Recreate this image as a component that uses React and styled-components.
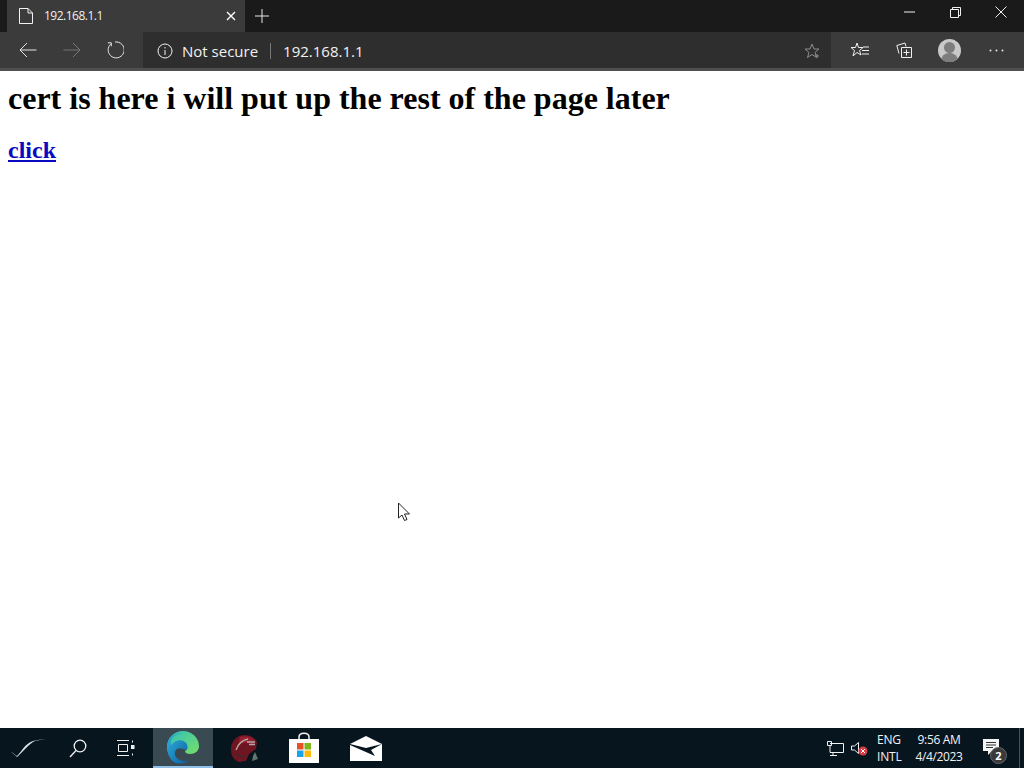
import React from 'react';
import styled, { createGlobalStyle } from 'styled-components';

const Global = createGlobalStyle`
  html, body { margin: 0; padding: 0; height: 100%; overflow: hidden; background: #fff; }
  #root { height: 100%; }
`;
const Screen = styled.div`
  position: relative; width: 1024px; height: 768px; display: flex; flex-direction: column;
  font-family: "Open Sans", "Noto Sans", sans-serif; overflow: hidden;
`;
const Glyph = styled.svg.attrs(p => ({
  fill: p.fill || 'none',
  stroke: p.$noStroke ? 'none' : 'currentColor',
  strokeWidth: p.$weight || 1,
}))`
  color: ${p => p.$tone || '#f2f2f2'};
  flex: none;
  margin-right: ${p => p.$nudgeLeft || 0}px;
  margin-left: ${p => p.$nudgeRight || 0}px;
`;
const TitleBar = styled.div`
  height: 32px; background: #1a1a1a; display: flex; align-items: flex-end; flex: none; padding-left: 7px;
`;
const Tab = styled.div`
  width: 238px; height: 32px; box-sizing: border-box; background: #3b3b3b; display: flex; align-items: center;
  padding: 0 9px 0 12px; color: #f0f0f0; font-size: 12px; letter-spacing: -0.5px;
`;
const TabTitle = styled.span`
  flex: 1; margin-left: 11px; margin-top: -1px;
`;
const NewTab = styled.div`
  width: 34px; height: 32px; display: flex; align-items: center; justify-content: center;
`;
const WindowButtons = styled.div`
  margin-left: auto; height: 32px; display: flex;
`;
const WindowButton = styled.div`
  width: 46px; height: 24px; display: flex; align-items: center; justify-content: center;
`;
const Toolbar = styled.div`
  height: 36px; flex: none; background: #3b3b3b; border-bottom: 3px solid #4f4f4f; box-sizing: content-box;
  display: flex; align-items: center; padding-left: 6px;
`;
const NavButton = styled.div`
  width: 44px; height: 36px; display: flex; align-items: center; justify-content: center; flex: none;
`;
const AddressBar = styled.div`
  width: 688px; height: 36px; margin-left: 5px; background: #2e2e2e; display: flex; align-items: center;
  padding-left: 14px; box-sizing: border-box; color: #f2f2f2; font-size: 15px; flex: none; padding-top: 1px;
`;
const NotSecure = styled.span`
  margin-left: 9px; padding-right: 12px; border-right: 1px solid #777; line-height: 16px;
`;
const Url = styled.span`
  margin-left: 12px; flex: 1;
`;
const StarBox = styled.div`
  width: 38px; display: flex; justify-content: center;
`;
const ToolIcons = styled.div`
  display: flex; align-items: center; flex: none; margin-left: 6px;
`;
const ToolIcon = styled.div`
  width: 45px; height: 36px; display: flex; align-items: center; justify-content: center;
`;
const Avatar = styled.div`
  width: 23px; height: 23px; border-radius: 50%; background: #c9c9c9; position: relative; overflow: hidden;
`;
const AvatarHead = styled.div`
  position: absolute; left: 6px; top: 3px; width: 11px; height: 11px; border-radius: 50%; background: #7d7d7d;
`;
const AvatarBody = styled.div`
  position: absolute; left: 3px; top: 14px; width: 17px; height: 12px; border-radius: 8px 8px 0 0; background: #7d7d7d;
`;
const Page = styled.main`
  flex: 1; background: #fff; padding: 0 8px; font-family: "Liberation Serif", serif; color: #000; min-height: 0;
`;
const Heading = styled.h1`
  font-size: 32px; line-height: 34px; font-weight: 700; margin: 10px 0 0;
`;
const Sub = styled.h2`
  font-size: 24px; line-height: 28px; font-weight: 700; margin: 21px 0 0;
`;
const Link = styled.a`
  color: #0a0ac0; text-decoration: underline;
`;
const Pointer = styled.svg`
  position: absolute; left: 397px; top: 502px;
`;
const Taskbar = styled.footer`
  height: 40px; flex: none; background: #07151f; display: flex; align-items: stretch; color: #f2f2f2;
`;
const TaskButton = styled.div`
  width: ${p => p.$w}px; display: flex; align-items: center; justify-content: center; flex: none; box-sizing: border-box;
  ${p => p.$active && 'background: #3a4a52; border-bottom: 2px solid #8fc0e8;'}
`;
const Tray = styled.div`
  margin-left: auto; display: flex; align-items: center;
`;
const TrayIcon = styled.div`
  width: ${p => p.$w}px; display: flex; justify-content: center; align-items: center; flex: none;
`;
const Lang = styled.div`
  width: 28px; margin-left: 6px; font-size: 12px; line-height: 17px; letter-spacing: -0.2px;
`;
const Clock = styled.div`
  width: 64px; margin-left: 2px; text-align: center; font-size: 12px; line-height: 17px; letter-spacing: -0.35px;
`;
const Notify = styled.div`
  position: relative; width: 44px; height: 40px; margin-left: 4px; padding-left: 8px; box-sizing: border-box;
  display: flex; align-items: center;
`;
const Badge = styled.div`
  position: absolute; left: 15px; top: 19px; width: 15px; height: 15px; border-radius: 50%; background: #3a3a3a;
  color: #fff; font-size: 11px; font-weight: 700; line-height: 15px; text-align: center; border: 1px solid #666;
`;
const ShowDesk = styled.div`
  width: 4px; border-left: 1px solid #47535a; align-self: stretch;
`;

export default function App() {
  return (
    <Screen>
      <Global />
      <TitleBar>
        <Tab>
          <Glyph width="14" height="16" viewBox="0 0 14 16">
            <path d="M.5.5h8.500l4.500 4.500v10.500h-13zM9 .5v4.500h4.500" />
          </Glyph>
          <TabTitle>192.168.1.1</TabTitle>
          <Glyph width="10" height="10" viewBox="0 0 10 10" $tone="#fff" $weight={1.4}>
            <path d="M1 1l8 8M9 1l-8 8" />
          </Glyph>
        </Tab>
        <NewTab>
          <Glyph width="14" height="14" viewBox="0 0 14 14" $tone="#e8e8e8">
            <path d="M7 0v14M0 7h14" />
          </Glyph>
        </NewTab>
        <WindowButtons>
          <WindowButton>
            <Glyph width="11" height="2" viewBox="0 0 11 2"><path d="M0 1h11" /></Glyph>
          </WindowButton>
          <WindowButton>
            <Glyph width="11" height="11" viewBox="0 0 11 11">
              <path d="M.5 2.500h8v8h-8zM2.500 2.500v-2h8v8h-2" />
            </Glyph>
          </WindowButton>
          <WindowButton>
            <Glyph width="12" height="12" viewBox="0 0 12 12">
              <path d="M.5.500l11 11M11.500.500l-11 11" />
            </Glyph>
          </WindowButton>
        </WindowButtons>
      </TitleBar>
      <Toolbar>
        <NavButton>
          <Glyph width="18" height="16" viewBox="0 0 18 16" $tone="#e6e6e6">
            <path d="M17.500 8H1M8 1L1 8l7 7" />
          </Glyph>
        </NavButton>
        <NavButton>
          <Glyph width="18" height="16" viewBox="0 0 18 16" $tone="#777">
            <path d="M.5 8H17M10 1l7 7-7 7" />
          </Glyph>
        </NavButton>
        <NavButton>
          <Glyph width="18" height="18" viewBox="0 0 18 18" $tone="#e6e6e6" $nudgeLeft={3}>
            <path d="M5 2.800A8 8 0 1 0 9 1M1.800 1.800h3.500v3.500" />
          </Glyph>
        </NavButton>
        <AddressBar>
          <Glyph width="16" height="16" viewBox="0 0 16 16">
            <circle cx="8" cy="8" r="7" />
            <path d="M8 7v5M8 4v1.500" />
          </Glyph>
          <NotSecure>Not secure</NotSecure>
          <Url>192.168.1.1</Url>
          <StarBox>
            <Glyph width="17" height="16" viewBox="0 0 17 16" $tone="#8c8c8c">
              <path d="M8 1l2 5h5l-4 3.500 1.500 5L8 11.500 3.500 14.500 5 9.500 1 6h5zM13 11v4M11 13h4" />
            </Glyph>
          </StarBox>
        </AddressBar>
        <ToolIcons>
          <ToolIcon>
            <Glyph width="18" height="16" viewBox="0 0 18 16" $tone="#f0f0f0">
              <path d="M6 1l1.500 4.500H12L8.500 8.500 10 13 6 10.500 2 14l1.500-5.500L0 5.500h4.500zM12 5h6M11 8.500h7M11 12h7" />
            </Glyph>
          </ToolIcon>
          <ToolIcon>
            <Glyph width="16" height="16" viewBox="0 0 16 16" $tone="#f0f0f0" $nudgeLeft={2}>
              <path d="M3 11.500L.8 3.500 9 1l1 3.500M5.500 5.500h10v10h-10zM10.500 7.500v6M7.500 10.500h6" />
            </Glyph>
          </ToolIcon>
          <ToolIcon>
            <Avatar><AvatarHead /><AvatarBody /></Avatar>
          </ToolIcon>
          <ToolIcon>
            <Glyph width="15" height="3" viewBox="0 0 15 3" fill="#e6e6e6" $noStroke $nudgeRight={3}>
              <circle cx="1.500" cy="1.500" r="1" /><circle cx="7.500" cy="1.500" r="1" /><circle cx="13.500" cy="1.500" r="1" />
            </Glyph>
          </ToolIcon>
        </ToolIcons>
      </Toolbar>
      <Page>
        <Heading>cert is here i will put up the rest of the page later</Heading>
        <Sub><Link href="#">click</Link></Sub>
      </Page>
      <Pointer width="14" height="20" viewBox="0 0 14 20">
        <path d="M1.500 1v15l3.500-3 2.500 5.500 2.500-1-2.500-5.500h5z" fill="#fff" stroke="#222" strokeWidth="1" />
      </Pointer>
      <Taskbar>
        <TaskButton $w={57}>
          <svg width="38" height="20" viewBox="0 0 38 20" fill="none">
            <path d="M1 14c3 1 5 4 6 4 3-2 8-13 16-15 4-1 9-2 13-2-5 1-10 1-13 3C16 9 11 16 7 19 5 17 3 15 1 14z" fill="#d8dde0" />
          </svg>
        </TaskButton>
        <TaskButton $w={42}>
          <Glyph width="18" height="19" viewBox="0 0 18 19" $weight={1.3}>
            <circle cx="11" cy="7" r="5.800" /><path d="M7 11.500L1 18" />
          </Glyph>
        </TaskButton>
        <TaskButton $w={54}>
          <Glyph width="18" height="16" viewBox="0 0 18 16">
            <path d="M0 .5h12M0 15.500h12M1.500 4.500h9v7h-9zM15.500 .5v2M15.500 13.500v2" />
            <rect x="14" y="5" width="3.500" height="4" fill="currentColor" stroke="none" />
          </Glyph>
        </TaskButton>
        <TaskButton $w={60} $active>
          <svg width="34" height="34" viewBox="0 0 34 34">
            <defs>
              <linearGradient id="edgeA" x1="0" y1="0" x2="1" y2="1">
                <stop offset="0" stopColor="#2fb5d8" /><stop offset="1" stopColor="#0c59a4" />
              </linearGradient>
              <linearGradient id="edgeB" x1="0" y1="0" x2="1" y2="1">
                <stop offset="0" stopColor="#2fc0c0" /><stop offset="1" stopColor="#7be060" />
              </linearGradient>
            </defs>
            <path d="M1 17C1 8 8 1 17 1s16 7 16 15c0 5-4 8-9 8-3 0-5-1-5-3 2-1 3-3 2-5-1-3-5-4-9-3-6 2-9 7-7 14C3 25 1 21 1 17z" fill="url(#edgeB)" />
            <path d="M1 17C1 9 8 2 16 3c-7 1-12 5-11 12 4-5 10-6 14-3 3 2 3 6 1 8-2-1-6-3-9-1-3 2-3 7 1 10 3 2 8 3 12 1-4 3-10 4-14 3C4 31 1 23 1 17z" fill="url(#edgeA)" />
          </svg>
        </TaskButton>
        <TaskButton $w={62}>
          <svg width="32" height="32" viewBox="0 0 32 32">
            <path d="M3 17C3 9 9 3 17 3c6 0 10 3 12 7l-1 7-7 5-3 7-7 1c-6-2-8-7-8-13z" fill="#6f1522" />
            <path d="M12 5c6-2 12 0 15 4l-1 4c-6-3-12-3-16 1z" fill="#94202f" />
            <path d="M8 18c2-6 7-10 12-11M19 10h8M21 12.500h6" stroke="#b3a8a6" strokeWidth="1.300" fill="none" />
            <path d="M8 22c2 2 5 3 9 2" stroke="#3b2a2a" strokeWidth="1.500" fill="none" />
            <path d="M27 20l3 7-6 2 1-5z" fill="#5f7a6c" />
          </svg>
        </TaskButton>
        <TaskButton $w={58}>
          <svg width="32" height="32" viewBox="0 0 32 32">
            <path d="M11 8V5c0-5 10-5 10 0v3" fill="none" stroke="#f2f2f2" strokeWidth="1.500" />
            <path d="M1 7h30v24H1z" fill="#fff" />
            <rect x="9" y="11" width="6.500" height="6.500" fill="#e8502a" />
            <rect x="16.500" y="11" width="6.500" height="6.500" fill="#7cb81c" />
            <rect x="9" y="18.500" width="6.500" height="6.500" fill="#1aa3e8" />
            <rect x="16.500" y="18.500" width="6.500" height="6.500" fill="#fbb90c" />
          </svg>
        </TaskButton>
        <TaskButton $w={66}>
          <svg width="32" height="25" viewBox="0 0 32 25">
            <path d="M0 8L16 0l16 8v17H0z" fill="#fff" />
            <path d="M0 8l16 4 16-4-11 6 4 6L0 9z" fill="#07151f" />
          </svg>
        </TaskButton>
        <Tray>
          <TrayIcon $w={24}>
            <Glyph width="17" height="15" viewBox="0 0 17 15">
              <path d="M3 2.500h13.500v9H3M3 5v6.500M6 11.500v3M3 14.500h7M.5 .5h4v4h-4z" />
            </Glyph>
          </TrayIcon>
          <TrayIcon $w={24}>
            <svg width="17" height="15" viewBox="0 0 17 15">
              <path d="M.5 5h3L7.500 1.500v11L3.500 9h-3z" fill="none" stroke="#f2f2f2" />
              <circle cx="12" cy="10" r="4.500" fill="#d83b45" />
              <path d="M10 8l4 4M14 8l-4 4" stroke="#fff" />
            </svg>
          </TrayIcon>
          <Lang>ENG<br />INTL</Lang>
          <Clock>9:56 AM<br />4/4/2023</Clock>
          <Notify>
            <svg width="16" height="18" viewBox="0 0 16 18">
              <path d="M0 0h16v12H9l-4 4v-4H0z" fill="#f4f4f4" />
              <path d="M3 3.500h10M3 6h10M3 8.500h7" stroke="#333" />
            </svg>
            <Badge>2</Badge>
          </Notify>
          <ShowDesk />
        </Tray>
      </Taskbar>
    </Screen>
  );
}
